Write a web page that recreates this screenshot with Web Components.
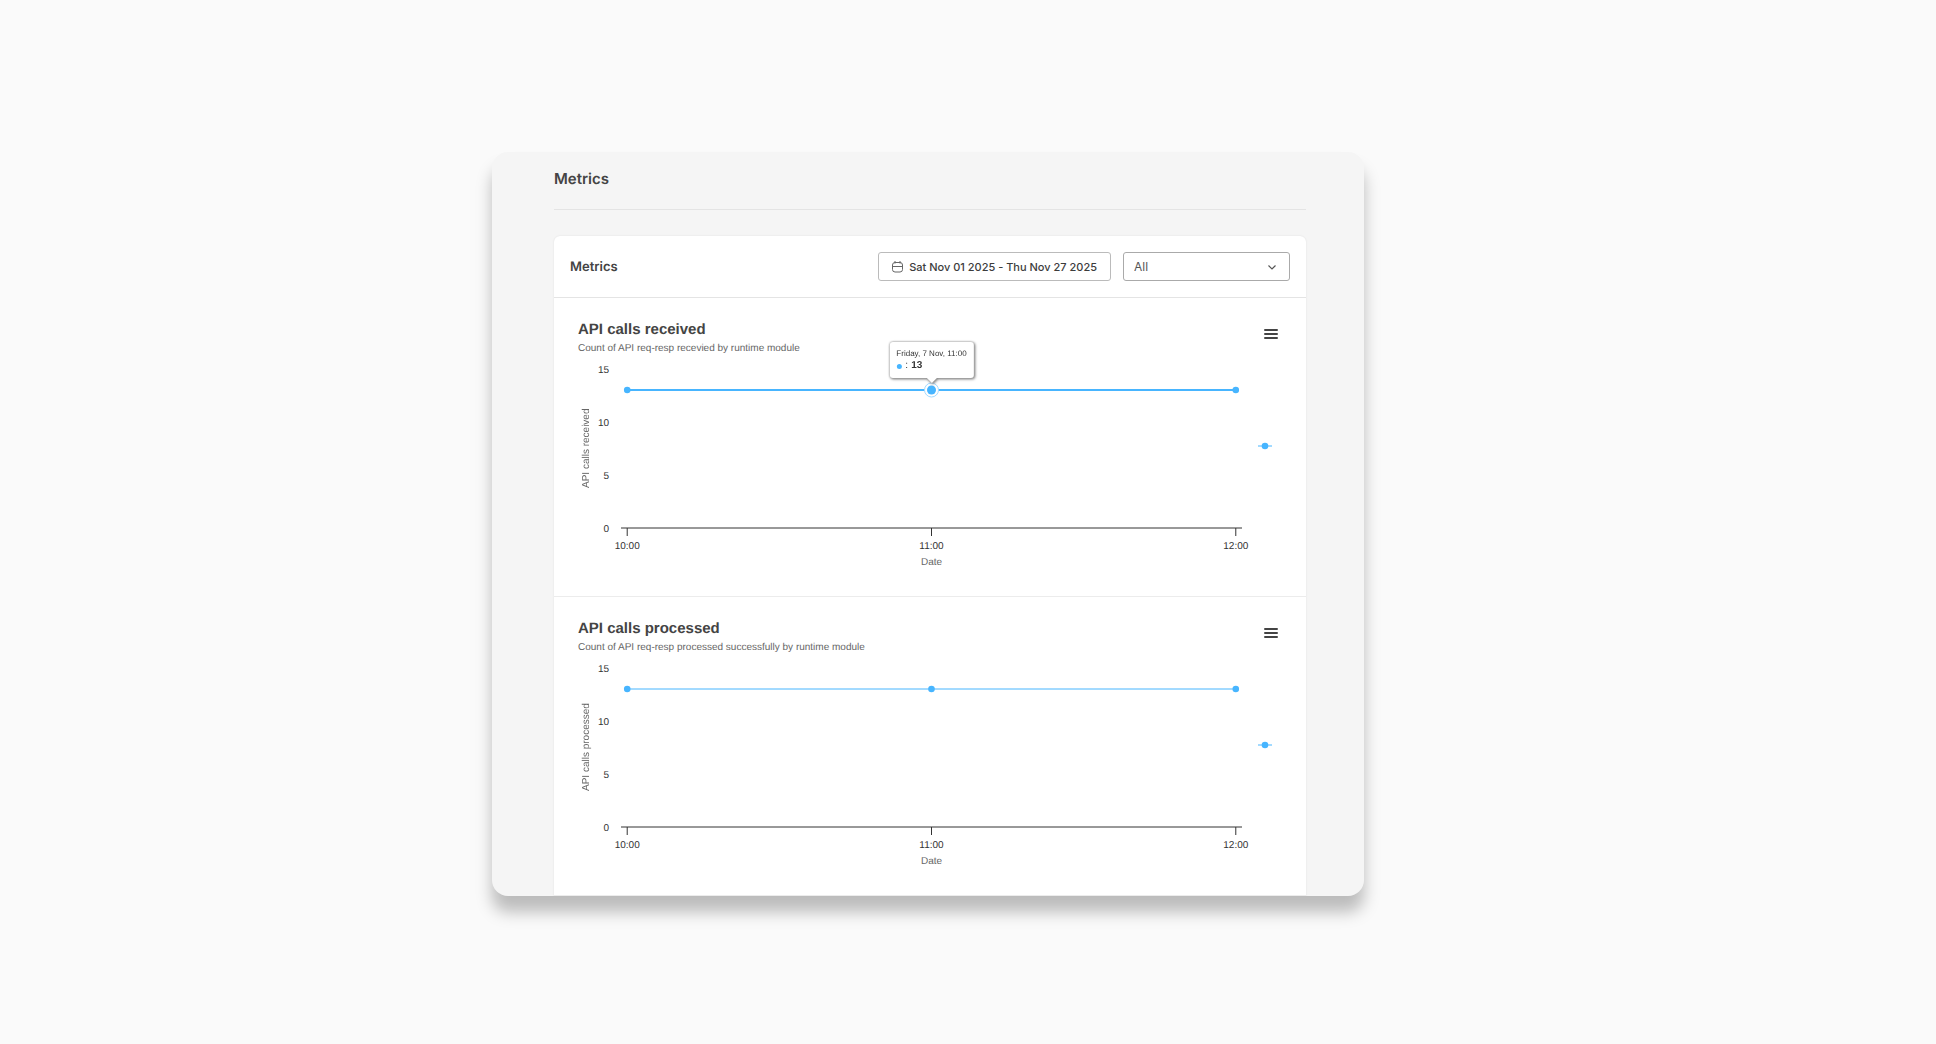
<!DOCTYPE html>
<html lang="en">
<head>
<meta charset="utf-8">
<meta name="viewport" content="width=device-width, initial-scale=1">
<title>Metrics</title>
<style>
  body {
    margin: 0;
    min-height: 100vh;
    background-color: #fafafa;
    font-family: Inter, "Liberation Sans", sans-serif;
    text-rendering: geometricPrecision;
    color: #444;
  }
</style>
</head>
<body>
<metrics-page heading="Metrics">
  <metrics-card heading="Metrics">
    <date-range slot="tools">Sat Nov 01 2025 - Thu Nov 27 2025</date-range>
    <module-filter slot="tools">
      <option>All</option>
    </module-filter>
    <line-chart heading="API calls received" axis="API calls received" values="13,13,13" active="1" tip="Friday, 7 Nov, 11:00">Count of API req-resp recevied by runtime module</line-chart>
    <line-chart heading="API calls processed" axis="API calls processed" values="13,13,13">Count of API req-resp processed successfully by runtime module</line-chart>
  </metrics-card>
</metrics-page>

<script>
class MetricsPage extends HTMLElement {
  constructor() {
    super();
    this.shadowDOM = this.attachShadow({mode: 'open'});
  }
  connectedCallback() {
    this.render();
  }
  render() {
    this.shadowDOM.innerHTML = `
      <style>
        :host {
          display: flex;
          justify-content: center;
          padding: 152px 80px 148px 0;
        }

        main {
          box-sizing: border-box;
          width: 100%;
          max-width: 872px;
          padding: 17px 58px 0 62px;
          border-radius: 16px;
          background-color: #f5f5f5;
          box-shadow: 0 16px 16px rgba(0, 0, 0, 0.25);
          overflow: hidden;
        }

        h1 {
          margin: 0 0 26px;
          padding-bottom: 20px;
          border-bottom: 1px solid #e4e4e4;
          font-size: 15px;
          line-height: 20px;
          font-weight: 600;
        }
      </style>

      <main>
        <h1>${this.getAttribute('heading')}</h1>
        <slot></slot>
      </main>`;
  }
}
customElements.define('metrics-page', MetricsPage);

class MetricsCard extends HTMLElement {
  constructor() {
    super();
    this.shadowDOM = this.attachShadow({mode: 'open'});
  }
  connectedCallback() {
    this.render();
  }
  render() {
    this.shadowDOM.innerHTML = `
      <style>
        :host {
          display: block;
          border-radius: 6px 6px 0 0;
          background-color: white;
          box-shadow: 0 0 2px rgba(0, 0, 0, 0.1);
        }

        header {
          box-sizing: border-box;
          display: flex;
          align-items: center;
          justify-content: space-between;
          min-height: 62px;
          padding: 0 16px;
          border-bottom: 1px solid #e4e4e4;
        }

        h2 {
          margin: 0;
          font-size: 13px;
          line-height: 20px;
          font-weight: 600;
        }

        .tools {
          display: flex;
          gap: 12px;
        }
      </style>

      <header>
        <h2>${this.getAttribute('heading')}</h2>
        <div class="tools"><slot name="tools"></slot></div>
      </header>
      <slot></slot>`;
  }
}
customElements.define('metrics-card', MetricsCard);

class DateRange extends HTMLElement {
  constructor() {
    super();
    this.shadowDOM = this.attachShadow({mode: 'open'});
  }
  connectedCallback() {
    this.render();
  }
  render() {
    this.shadowDOM.innerHTML = `
      <style>
        :host {
          display: block;
        }

        button {
          box-sizing: border-box;
          display: flex;
          align-items: center;
          gap: 5px;
          height: 29px;
          padding: 0 13px;
          border: 1px solid #bbb;
          border-radius: 3px;
          background-color: white;
          color: #3c3c3c;
          font: 500 11px Inter, sans-serif;
          cursor: pointer;
        }
      </style>

      <button type="button">
        <svg width="12" height="12" viewBox="0 0 12 12" fill="none" stroke="#666" aria-hidden="true">
          <rect x="0.5" y="1.5" width="10" height="9.500" rx="2.500"/>
          <path d="M0.500 5.500h10M3 0v2.500M8 0v2.500"/>
        </svg>
        <slot></slot>
      </button>`;
  }
}
customElements.define('date-range', DateRange);

class ModuleFilter extends HTMLElement {
  constructor() {
    super();
    this.shadowDOM = this.attachShadow({mode: 'open'});
  }
  connectedCallback() {
    this.render();
  }
  render() {
    const options = [...this.querySelectorAll('option')].map(o => o.outerHTML).join('');
    this.shadowDOM.innerHTML = `
      <style>
        :host {
          display: block;
        }

        label {
          display: grid;
          grid-template-columns: 1fr 24px;
          align-items: center;
          width: 167px;
        }

        select {
          grid-area: 1 / 1 / 2 / 3;
          appearance: none;
          box-sizing: border-box;
          width: 100%;
          height: 29px;
          padding: 0 24px 0 10px;
          border: 1px solid #aaa;
          border-radius: 3px;
          background-color: white;
          color: #555;
          font: 12px Inter, sans-serif;
        }

        svg {
          grid-area: 1 / 2;
          pointer-events: none;
        }
      </style>

      <label>
        <select aria-label="Module">${options}</select>
        <svg width="12" height="12" viewBox="0 0 12 12" fill="none" stroke="#555" stroke-width="1.2" aria-hidden="true">
          <path d="M2.500 4.500 6 8l3.500-3.500"/>
        </svg>
      </label>`;
  }
}
customElements.define('module-filter', ModuleFilter);

const TOP = 14;
const BASE = 173;
const MAX = 15;

class LineChart extends HTMLElement {
  constructor() {
    super();
    this.shadowDOM = this.attachShadow({mode: 'open'});
  }
  connectedCallback() {
    this.render();
  }
  yOf(value) {
    return Math.round(BASE - (BASE - TOP) * value / MAX);
  }
  render() {
    const heading = this.getAttribute('heading');
    const values = this.getAttribute('values').split(',').map(Number);
    const active = this.hasAttribute('active') ? Number(this.getAttribute('active')) : -1;
    const times = ['10:00', '11:00', '12:00'];
    const xs = ['1%', '50%', '99%'];

    const yLabels = [15, 10, 5, 0].map(v =>
      `<text x="14" y="${this.yOf(v) + 4}" text-anchor="end">${v}</text>`).join('');

    const ticks = times.map((t, i) => `
      <line class="axis" x1="${xs[i]}" x2="${xs[i]}" y1="${BASE}" y2="${BASE + 8}"/>
      <text x="${xs[i]}" y="194" text-anchor="middle">${t}</text>`).join('');

    const lines = values.slice(1).map((v, i) => `
      <line class="series" x1="${xs[i]}" y1="${this.yOf(values[i])}" x2="${xs[i + 1]}" y2="${this.yOf(v)}"/>`).join('');

    const points = values.map((v, i) => i === active ? `
      <circle class="halo" cx="${xs[i]}" cy="${this.yOf(v)}" r="7"/>
      <circle class="point" cx="${xs[i]}" cy="${this.yOf(v)}" r="4.500"/>` : `
      <circle class="point" cx="${xs[i]}" cy="${this.yOf(v)}" r="3.300"/>`).join('');

    const tip = active < 0 ? '' : `
      <div class="tip" role="tooltip">
        <div>${this.getAttribute('tip')}</div>
        <div class="value"><i></i><span>:</span><b>${values[active]}</b></div>
      </div>`;

    this.shadowDOM.innerHTML = `
      <style>
        :host {
          display: block;
          padding: 22px 24px 21px;
          border-bottom: 1px solid #ececec;
          font-family: "Liberation Sans", Arial, sans-serif;
          font-size: 10px;
        }

        header {
          display: flex;
          justify-content: space-between;
          align-items: flex-start;
        }

        h3 {
          margin: 0 0 3px;
          color: #444;
          font-size: 15px;
          line-height: 20px;
        }

        p {
          margin: 0;
          color: #666;
          line-height: 12px;
        }

        .menu {
          display: flex;
          padding: 8px 4px;
          border: 0;
          background: none;
          cursor: pointer;
        }

        .chart {
          display: grid;
          grid-template-columns: 17px 14px 1fr 24px;
        }

        .chart svg {
          display: block;
          height: 220px;
          overflow: visible;
        }

        .y-title {
          display: flex;
          justify-content: center;
          align-items: center;
          height: 187px;
          color: #666;
          line-height: 17px;
          writing-mode: vertical-rl;
          rotate: 180deg;
        }

        .plot {
          position: relative;
          margin: 0 16px 0 12px;
        }

        .plot svg {
          width: 100%;
        }

        text {
          fill: #333;
        }

        .title {
          fill: #666;
        }

        .axis {
          stroke: #333;
        }

        .series {
          stroke: #47b5ff;
        }

        .hover .series {
          stroke-width: 2;
        }

        .point {
          fill: #47b5ff;
        }

        .halo {
          fill: white;
          stroke: #a3daff;
        }

        .tip {
          position: absolute;
          left: 50%;
          top: -13px;
          translate: -50% 0;
          padding: 6px 7px;
          border-radius: 3px;
          background-color: white;
          color: #333;
          font-size: 8px;
          line-height: 12px;
          white-space: nowrap;
          filter: drop-shadow(0 0 1px #999) drop-shadow(1px 1px 1px #888);
        }

        .tip::after {
          content: "";
          position: absolute;
          left: 50%;
          top: 100%;
          translate: -50% 0;
          border: 5px solid transparent;
          border-top-color: white;
          border-bottom: 0;
        }

        .value {
          display: flex;
          align-items: center;
          gap: 3px;
          font-size: 10px;
        }

        .value i {
          width: 5px;
          height: 5px;
          margin-right: 1px;
          border-radius: 50%;
          background-color: #47b5ff;
        }
      </style>

      <header>
        <div>
          <h3>${heading}</h3>
          <p><slot></slot></p>
        </div>
        <button class="menu" type="button" aria-label="Chart menu">
          <svg width="14" height="12" viewBox="0 0 14 12" stroke="#444" stroke-width="2" stroke-linecap="round" aria-hidden="true">
            <path d="M1 2h12M1 6h12M1 10h12"/>
          </svg>
        </button>
      </header>
      <div class="chart">
        <div class="y-title">${this.getAttribute('axis')}</div>
        <svg width="14">${yLabels}</svg>
        <div class="plot">
          <svg class="${active < 0 ? '' : 'hover'}">
            <line class="axis" x1="0" x2="100%" y1="${BASE}" y2="${BASE}"/>
            ${ticks}
            <text class="title" x="50%" y="210" text-anchor="middle">Date</text>
            ${lines}
            ${points}
          </svg>
          ${tip}
        </div>
        <svg width="14">
          <line class="series" x1="0" x2="14" y1="91" y2="91"/>
          <circle class="point" cx="7" cy="91" r="3.300"/>
        </svg>
      </div>`;
  }
}
customElements.define('line-chart', LineChart);
</script>
</body>
</html>
